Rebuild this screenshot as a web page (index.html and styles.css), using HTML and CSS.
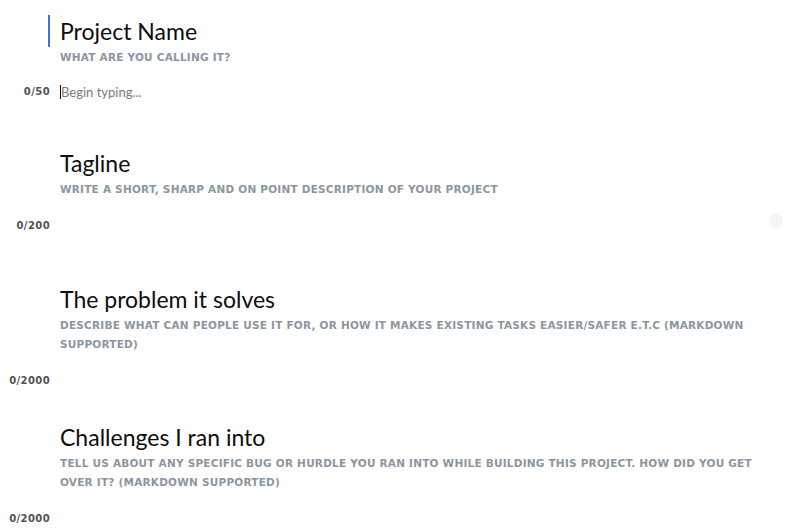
FILE: index.html
```html
<!DOCTYPE html>
<html lang="en">
<head>
<meta charset="utf-8">
<title>Project form</title>
<link rel="stylesheet" href="styles.css">
</head>
<body>
<main class="form">
  <section class="field field--active field--input">
    <h2 class="field-title">Project Name</h2>
    <p class="field-hint">What are you calling it?</p>
    <div class="field-row">
      <span class="counter">0/50</span>
      <div class="entry"><span class="caret"></span><span class="placeholder">Begin typing...</span></div>
    </div>
  </section>
  <section class="field field--tagline">
    <h2 class="field-title">Tagline</h2>
    <p class="field-hint">Write a short, sharp and on point description of your project</p>
    <div class="field-row">
      <span class="counter">0/200</span>
      <div class="entry"><span class="spinner"></span></div>
    </div>
  </section>
  <section class="field field--problem">
    <h2 class="field-title">The problem it solves</h2>
    <p class="field-hint">Describe what can people use it for, or how it makes existing tasks easier/safer e.t.c (Markdown supported)</p>
    <div class="field-row">
      <span class="counter">0/2000</span>
      <div class="entry"></div>
    </div>
  </section>
  <section class="field field--challenges">
    <h2 class="field-title">Challenges I ran into</h2>
    <p class="field-hint">Tell us about any specific bug or hurdle you ran into while building this project. How did you get over it? (Markdown supported)</p>
    <div class="field-row">
      <span class="counter">0/2000</span>
      <div class="entry"></div>
    </div>
  </section>
</main>
</body>
</html>
```

FILE: styles.css
```css
* { box-sizing: border-box; }

html, body {
  margin: 0;
  padding: 0;
  background: #ffffff;
}

body {
  font-family: "Lato", "Open Sans", sans-serif;
  color: #0d0d0d;
}

.form {
  padding: 15px 24px 0 8px;
  display: flex;
  flex-direction: column;
}

.field {
  display: grid;
  grid-template-columns: 42px 1fr;
  column-gap: 10px;
}

.field--input { padding-bottom: 45px; }
.field--tagline { padding-bottom: 47px; }
.field--problem { padding-bottom: 30px; }
.field--challenges { padding-bottom: 10px; }

.field-title {
  grid-column: 2;
  margin: 0;
  font-family: "Lato", sans-serif;
  font-weight: 400;
  font-size: 23px;
  line-height: 32px;
  color: #0d0d0d;
  position: relative;
}

.field--active .field-title::before {
  content: "";
  position: absolute;
  left: -12px;
  top: 0;
  width: 2px;
  height: 32px;
  background: #3b6ff0;
}

.field-hint {
  grid-column: 2;
  margin: 1px 0 0;
  font-family: "DejaVu Sans", sans-serif;
  font-weight: 700;
  font-size: 10.5px;
  line-height: 19px;
  letter-spacing: 0.22px;
  text-transform: uppercase;
  color: #8c96a0;
}

.field-row {
  grid-column: 1 / -1;
  display: grid;
  grid-template-columns: 42px 1fr;
  column-gap: 10px;
  align-items: center;
  margin-top: 17px;
  height: 20px;
}

.field--input .field-row {
  margin-top: 15px;
}

.counter {
  text-align: right;
  font-family: "DejaVu Sans", sans-serif;
  font-weight: 700;
  font-size: 10px;
  letter-spacing: 0.4px;
  line-height: 20px;
  color: #4d535a;
  white-space: nowrap;
}

.entry {
  display: flex;
  align-items: center;
  height: 20px;
  line-height: 20px;
  font-size: 13px;
}

.caret {
  width: 1px;
  height: 14px;
  background: #111;
}

.placeholder {
  color: #7a7a7a;
  font-family: "Lato", sans-serif;
  font-size: 13px;
}

.spinner {
  margin-left: auto;
  margin-right: -6px;
  margin-top: -10px;
  width: 15px;
  height: 15px;
  border-radius: 50%;
  background: #f6f6f6;
}
```
